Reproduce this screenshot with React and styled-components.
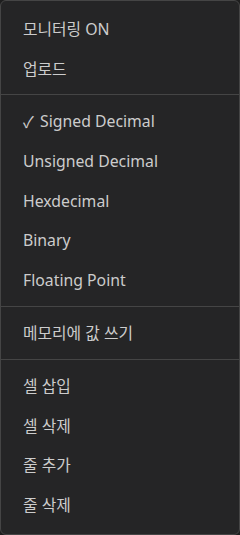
import React from 'react'
import styled, { createGlobalStyle } from 'styled-components'

const GlobalStyle = createGlobalStyle`
  html, body {
    margin: 0;
    padding: 0;
    background: #1e1e1e;
  }
  body {
    font-family: "Noto Sans", "Noto Sans CJK KR", sans-serif;
  }
`

const sections = [
  [{ label: '모니터링 ON' }, { label: '업로드' }],
  [
    { label: 'Signed Decimal', checked: true },
    { label: 'Unsigned Decimal' },
    { label: 'Hexdecimal' },
    { label: 'Binary' },
    { label: 'Floating Point' },
  ],
  [{ label: '메모리에 값 쓰기' }],
  [{ label: '셀 삽입' }, { label: '셀 삭제' }, { label: '줄 추가' }, { label: '줄 삭제' }],
]

export default function App () {
  return (
    <>
      <GlobalStyle />
      <Menu>
        {sections.map((items, i) => (
          <React.Fragment key={i}>
            {i > 0 && <Separator />}
            {items.map((item) => (
              <Item key={item.label}>
                {item.checked && <Check>✓</Check>}
                {item.label}
              </Item>
            ))}
          </React.Fragment>
        ))}
      </Menu>
    </>
  )
}

const Menu = styled.div`
  box-sizing: border-box;
  width: 240px;
  height: 535px;
  background: #252526;
  border: 1px solid #454545;
  border-radius: 6px;
  padding: 8px 0;
  display: flex;
  flex-direction: column;
  overflow: hidden;
`

const Item = styled.div`
  height: 39.7px;
  display: flex;
  align-items: center;
  padding-left: 22px;
  color: #cccccc;
  font-size: 15.8px;
  white-space: nowrap;
`

const Check = styled.span`
  width: 17px;
  display: inline-block;
`

const Separator = styled.div`
  height: 1px;
  margin: 6px -1px;
  background: #454545;
`
